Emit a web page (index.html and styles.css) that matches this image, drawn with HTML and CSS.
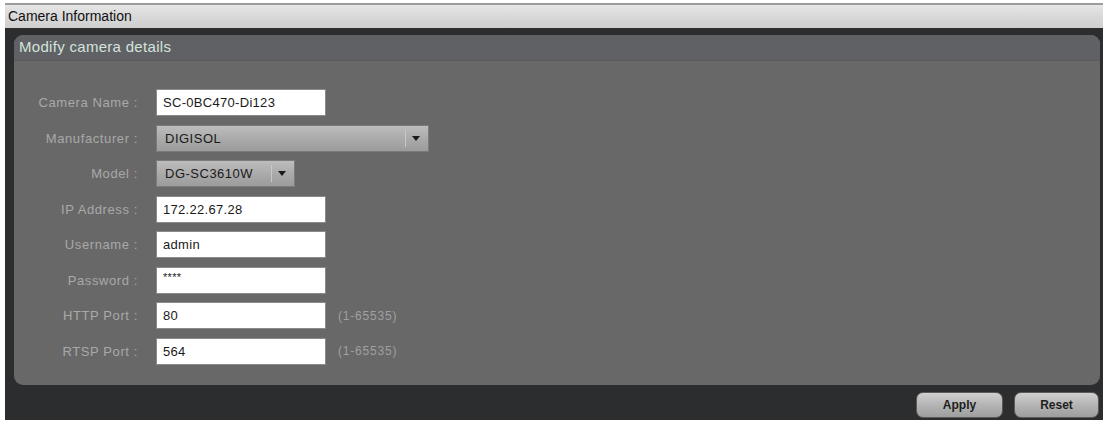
FILE: index.html
```html
<!DOCTYPE html>
<html>
<head>
<meta charset="utf-8">
<title>Camera Information</title>
<link rel="stylesheet" href="styles.css">
</head>
<body>
<div class="window">
  <div class="titlebar">Camera Information</div>
  <div class="frame">
    <div class="panel">
      <div class="panel-header">Modify camera details</div>
      <div class="form">
        <div class="row">
          <span class="label">Camera Name :</span>
          <div class="field">SC-0BC470-Di123</div>
        </div>
        <div class="row">
          <span class="label">Manufacturer :</span>
          <div class="select select-wide"><span class="select-text">DIGISOL</span><span class="select-btn"><svg width="8" height="5" viewBox="0 0 8 5"><path d="M0 0H8L4 5Z" fill="#1a1a1a"/></svg></span></div>
        </div>
        <div class="row">
          <span class="label">Model :</span>
          <div class="select select-narrow"><span class="select-text">DG-SC3610W</span><span class="select-btn"><svg width="8" height="5" viewBox="0 0 8 5"><path d="M0 0H8L4 5Z" fill="#1a1a1a"/></svg></span></div>
        </div>
        <div class="row">
          <span class="label">IP Address :</span>
          <div class="field">172.22.67.28</div>
        </div>
        <div class="row">
          <span class="label">Username :</span>
          <div class="field">admin</div>
        </div>
        <div class="row">
          <span class="label">Password :</span>
          <div class="field field-pass">****</div>
        </div>
        <div class="row">
          <span class="label">HTTP Port :</span>
          <div class="field">80</div>
          <span class="hint">(1-65535)</span>
        </div>
        <div class="row">
          <span class="label">RTSP Port :</span>
          <div class="field">564</div>
          <span class="hint">(1-65535)</span>
        </div>
      </div>
    </div>
    <div class="actions">
      <button class="btn btn-apply">Apply</button>
      <button class="btn btn-reset">Reset</button>
    </div>
  </div>
</div>
</body>
</html>
```
FILE: styles.css
```css
html, body {
  margin: 0;
  padding: 0;
  background: #ffffff;
  font-family: "Liberation Sans", Arial, sans-serif;
}

.window {
  margin: 3px 1px 0 5px;
  width: 1098px;
}

.titlebar {
  height: 25px;
  box-sizing: border-box;
  border-top: 2px solid #9c9c9c;
  background: linear-gradient(#e6e6e6, #d6d6d6 60%, #cfcfcf);
  color: #111;
  font-size: 14px;
  line-height: 23px;
  padding-left: 3px;
}

.frame {
  height: 392px;
  box-sizing: border-box;
  background: #2c2d2f;
  padding: 7px 3px 0 9px;
  display: flex;
  flex-direction: column;
}

.panel {
  height: 350px;
  border-radius: 9px;
  background: #686868;
  overflow: hidden;
}

.panel-header {
  height: 26px;
  box-sizing: border-box;
  background: #606164;
  border-bottom: 1px solid #59595b;
  color: #d3e3dc;
  font-size: 15px;
  letter-spacing: 0.3px;
  line-height: 24px;
  padding-left: 5px;
}

.form {
  padding-top: 28px;
  display: flex;
  flex-direction: column;
  gap: 8.5px;
}

.row {
  display: flex;
  align-items: center;
  height: 27px;
}

.label {
  width: 124px;
  text-align: right;
  color: #a9a9a9;
  font-size: 13px;
  letter-spacing: 0.6px;
  margin-right: 18px;
  white-space: nowrap;
}

.field {
  width: 170px;
  height: 27px;
  box-sizing: border-box;
  background: #ffffff;
  border: 1px solid #8a8a8a;
  color: #1a1a1a;
  font-size: 13px;
  letter-spacing: 0.3px;
  line-height: 25px;
  padding-left: 6px;
}

.field-pass {
  font-size: 11px;
  line-height: 18px;
}

.hint {
  margin-left: 12px;
  color: #a0a0a0;
  font-size: 12px;
  letter-spacing: 0.8px;
}

.select {
  height: 27px;
  box-sizing: border-box;
  background: linear-gradient(#bdbdbd, #a9a9a9 55%, #9c9c9c);
  border: 1px solid #7b7b7b;
  display: flex;
  align-items: center;
  color: #1a1a1a;
  font-size: 13px;
}

.select-wide { width: 273px; }
.select-narrow { width: 139px; }

.select-text {
  flex: 1;
  padding-left: 8px;
  letter-spacing: 0.5px;
}

.select-btn {
  width: 20px;
  height: 17px;
  border-left: 1px solid #c8c8c8;
  display: flex;
  align-items: center;
  justify-content: center;
  margin-right: 2px;
}

.actions {
  flex: 1;
  display: flex;
  justify-content: flex-end;
  align-items: flex-start;
  gap: 11px;
  padding-top: 7px;
  padding-right: 1px;
}

.btn {
  height: 26px;
  border: 1px solid #5a5a5a;
  border-radius: 7px;
  background: linear-gradient(#d0d0d0, #b4b4b4 50%, #9e9e9e);
  color: #1e1e1e;
  font-family: "Liberation Sans", Arial, sans-serif;
  font-weight: bold;
  font-size: 12px;
  padding: 0;
}

.btn-apply { width: 87px; }
.btn-reset { width: 85px; }
```
